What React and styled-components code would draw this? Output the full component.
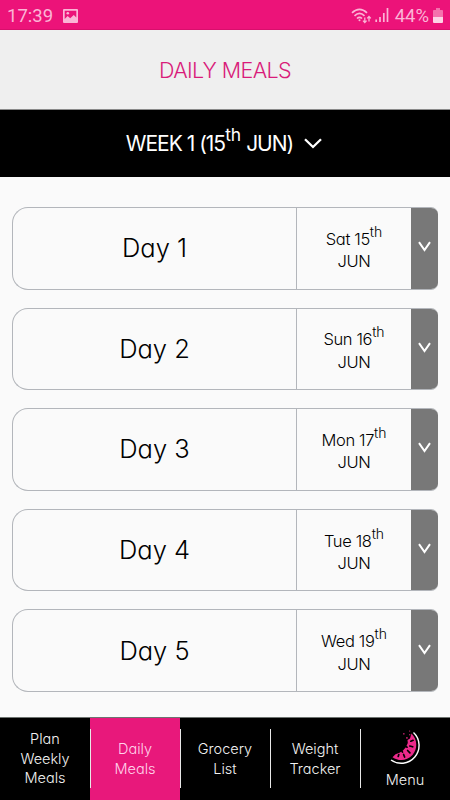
import styled, { createGlobalStyle } from "styled-components";

const GlobalStyle = createGlobalStyle`
    *, *::before, *::after {
        box-sizing: border-box;
    }

    body {
        margin: 0;
        background: #fafafa;
        font-family: Inter, "Open Sans", sans-serif;
        font-weight: 330;
        font-feature-settings: "cv11";
    }
`

const Screen = styled.div`
    display: flex;
    flex-direction: column;
    width: 450px;
    height: 800px;
    overflow: hidden;
    background: #fafafa;
`

const StatusBar = styled.div`
    display: flex;
    align-items: center;
    flex: none;
    height: 30px;
    padding: 2px 7px 0 7px;
    background: #ec1379;
    border-bottom: 1px solid #d80f6c;
    color: #fbb5d6;
    font-family: Roboto, sans-serif;
    font-size: 18.5px;
    font-weight: 400;
`

const StatusIcons = styled.div`
    display: flex;
    align-items: center;
    margin-left: auto;
`

const Header = styled.header`
    display: flex;
    align-items: center;
    justify-content: center;
    flex: none;
    height: 80px;
    background: #efefef;
    border-bottom: 1px solid #8a8a8a;
`

const Title = styled.h1`
    margin: 0;
    color: #d91b7a;
    font-size: 21.5px;
    font-weight: 350;
    letter-spacing: -0.6px;
`

const WeekBar = styled.button`
    display: flex;
    align-items: center;
    justify-content: center;
    flex: none;
    gap: 11px;
    height: 67px;
    padding: 0 2px 0 0;
    border: none;
    background: #000;
    color: #fff;
    font: inherit;
    font-size: 21px;
    font-weight: 420;
    letter-spacing: -1px;
`

const Sup = styled.sup`
    position: relative;
    top: ${(props) => props.$rise}px;
    font-size: ${(props) => props.$size}px;
    letter-spacing: 0;
    line-height: 0;
    vertical-align: baseline;
`

const DayList = styled.main`
    display: flex;
    flex-direction: column;
    flex: 1;
    gap: 18.1px;
    padding: 30px 12px 0;
`

const DayCard = styled.section`
    display: flex;
    flex: none;
    height: 82.5px;
    border: 1px solid #b3b6bb;
    border-right: none;
    border-radius: 16px 7px 7px 16px;
    overflow: hidden;
`

const DayName = styled.div`
    display: flex;
    align-items: center;
    justify-content: center;
    width: 283px;
    padding-bottom: 1px;
    color: #000;
    font-size: 25.5px;
`

const DayDate = styled.div`
    display: flex;
    flex-direction: column;
    align-items: center;
    justify-content: center;
    width: 115px;
    padding-top: 4px;
    border-left: 1px solid #b3b6bb;
    color: #000;
    font-size: 16.5px;
    line-height: 22.5px;
    letter-spacing: -0.35px;
`

const Expand = styled.button`
    display: flex;
    align-items: center;
    justify-content: center;
    flex: 1;
    margin: -1px 0;
    padding: 0 0 3px;
    border: none;
    background: #787878;
`

const Nav = styled.nav`
    display: flex;
    flex: none;
    height: 83px;
    background: #000;
    border-top: 1px solid #6d7370;
`

const Tab = styled.a`
    display: flex;
    flex-direction: column;
    align-items: center;
    justify-content: center;
    position: relative;
    width: 90px;
    padding-bottom: 1px;
    background: ${(props) => (props.$active ? '#e8187b' : '#000')};
    color: ${(props) => (props.$active ? '#ffd3ea' : '#f2f2f2')};
    font-size: 14.5px;
    line-height: 19.5px;
    text-align: center;

    &:not(:first-child)::before {
        content: "";
        position: absolute;
        left: 0;
        top: 11px;
        width: 1px;
        height: 59px;
        background: #e8e8e8;
    }
`

const MenuTab = styled(Tab)`
    justify-content: flex-start;
    padding-top: 11px;
    gap: 5px;
`

const days = [
    { name: 'Day 1', date: 'Sat 15' },
    { name: 'Day 2', date: 'Sun 16' },
    { name: 'Day 3', date: 'Mon 17' },
    { name: 'Day 4', date: 'Tue 18' },
    { name: 'Day 5', date: 'Wed 19' },
]

const tabs = [
    { lines: ['Plan', 'Weekly', 'Meals'] },
    { lines: ['Daily', 'Meals'], active: true },
    { lines: ['Grocery', 'List'] },
    { lines: ['Weight', 'Tracker'] },
]

const StyledPicture = styled.svg`
    margin-left: 10px;
`

const StyledSignal = styled.svg`
    margin: 0 6px 0 3px;
`

const StyledBattery = styled.svg`
    margin-left: 4px;
`

const PictureIcon = () => (
    <StyledPicture width="15" height="14" viewBox="0 0 15 14">
        <path fill="#fbb5d6" fillRule="evenodd" d="M1 0h13q1 0 1 1v12q0 1-1 1H1q-1 0-1-1V1q0-1 1-1zM1.7 1.7v8.2L4.6 7l2.6 2.2L10.8 6l2.5 2.4V1.7z" />
        <circle cx="4.8" cy="4.2" r="1.3" fill="#fbb5d6" />
    </StyledPicture>
)

const WifiIcon = () => (
    <svg width="21" height="16" viewBox="0 0 21 16" fill="none" stroke="#fbb5d6" strokeWidth="1.7">
        <path d="M1 4.8q7.5-7 15 0M3.5 7.8q5-4.8 10 0M6 10.5q2.5-2.4 5 0" />
        <circle cx="8.5" cy="12.2" r="1" fill="#fbb5d6" stroke="none" />
        <path strokeWidth="1.3" d="M13.8 9.5v5M12 12.6l1.8 2 1.8-2M18 13.5V8.5M16.2 10.4l1.8-2 1.8 2" />
    </svg>
)

const SignalIcon = () => (
    <StyledSignal width="14" height="15" viewBox="0 0 14 15" stroke="#fbb5d6" strokeWidth="1.7">
        <path d="M1.2 11.5V14M5 9v5M8.8 5v9M12.5 0v14" />
    </StyledSignal>
)

const BatteryIcon = () => (
    <StyledBattery width="10" height="15" viewBox="0 0 10 16" preserveAspectRatio="none">
        <path fill="#f471ad" d="M3 0h4v2h2q1 0 1 1v7H0V3q0-1 1-1h2z" />
        <path fill="#fdd3e6" d="M0 9.5h10V15q0 1-1 1H1q-1 0-1-1z" />
    </StyledBattery>
)

const Chevron = ({ width, height, stroke }) => (
    <svg width={width} height={height} viewBox={`0 0 ${width} ${height}`} fill="none" stroke="#fff" strokeWidth={stroke}>
        <path d={`M1 1.2L${width / 2} ${height - 2}L${width - 1} 1.2`} />
    </svg>
)

const MelonIcon = () => (
    <svg width="32" height="36" viewBox="0 0 32 36">
        <path fill="none" stroke="#fff" strokeWidth="1.4" d="M24.5 3.5C31.5 10 31.8 21 25.8 28C19.5 35.5 9 36 2 31" />
        <path fill="#ec2a8b" d="M22.5 4.5C28.6 10.5 28.8 20 23.5 26C17.8 32.2 9.5 32.5 3.5 28.3L6.5 25.3L10.5 23.8L14 21.5L17 18L18.8 14L18.5 11L21 9.5z" />
        <g stroke="#000" strokeWidth="1.7" strokeLinecap="round">
            <path d="M9.8 25.5l-.6 1.9M14.6 25.5l1 2.5M18.6 21.5l2.3 2.3M20.8 17l2.9.8M21.8 12.2l2.3-.9M13 22.3l.5.8M17.3 17.8l.8.4" />
        </g>
        <g fill="#9c1a56">
            <rect x="14" y="4" width="1.6" height="1.6" />
            <rect x="20" y="1.5" width="1.2" height="1.2" />
            <rect x="17" y="8" width="1.8" height="1.8" />
            <rect x="20" y="5" width="1.4" height="1.4" />
        </g>
    </svg>
)

const App = () => {
    return (
        <Screen>
            <GlobalStyle />
            <StatusBar>
                17:39
                <PictureIcon />
                <StatusIcons>
                    <WifiIcon />
                    <SignalIcon />
                    44%
                    <BatteryIcon />
                </StatusIcons>
            </StatusBar>
            <Header>
                <Title>DAILY MEALS</Title>
            </Header>
            <WeekBar>
                <span>WEEK 1 (15<Sup $rise={-10} $size={17.5}>th</Sup> JUN)</span>
                <Chevron width={18} height={11} stroke={2.3} />
            </WeekBar>
            <DayList>
                {days.map((day) => (
                    <DayCard key={day.name}>
                        <DayName>{day.name}</DayName>
                        <DayDate>
                            <span>{day.date}<Sup $rise={-8} $size={14}>th</Sup></span>
                            <span>JUN</span>
                        </DayDate>
                        <Expand>
                            <Chevron width={13} height={11} stroke={2} />
                        </Expand>
                    </DayCard>
                ))}
            </DayList>
            <Nav>
                {tabs.map((tab) => (
                    <Tab key={tab.lines.join(' ')} $active={tab.active}>
                        {tab.lines.map((line) => <span key={line}>{line}</span>)}
                    </Tab>
                ))}
                <MenuTab>
                    <MelonIcon />
                    <span>Menu</span>
                </MenuTab>
            </Nav>
        </Screen>
    )
}

export default App;
